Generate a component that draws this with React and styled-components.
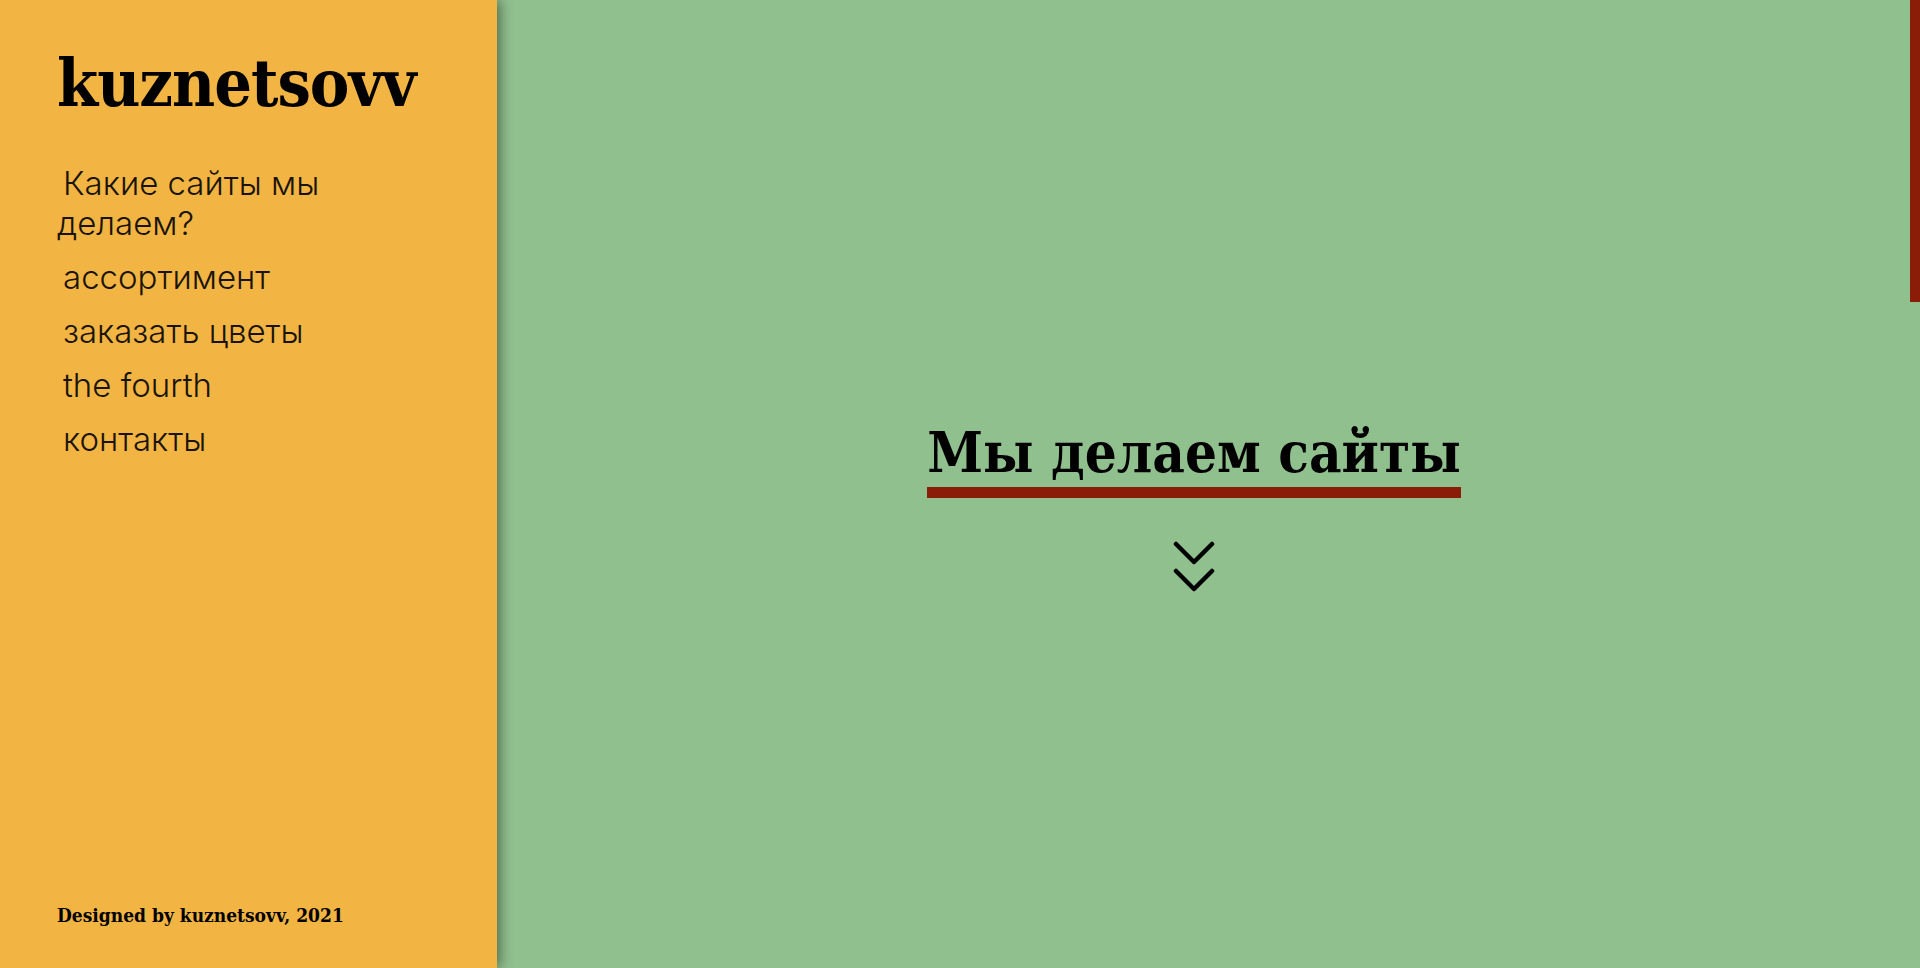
import styled, { createGlobalStyle } from "styled-components";

const GlobalStyle = createGlobalStyle`
  html, body {
    margin: 0;
    padding: 0;
    height: 100%;
    overflow: hidden;
  }
  #root {
    height: 100%;
  }
`;

const slab = `"DejaVu Serif", "Liberation Serif", serif`;
const light = `Inter, "Open Sans", sans-serif`;

const Page = styled.div`
  display: flex;
  height: 100vh;
  background: #91c08f;
`;

const Sidebar = styled.aside`
  width: 497px;
  flex-shrink: 0;
  box-sizing: border-box;
  padding: 44px 58px 42px 57px;
  background: #f2b443;
  box-shadow: 3px 0 12px rgba(0, 0, 0, 0.45);
  display: flex;
  flex-direction: column;
  position: relative;
  z-index: 1;
`;

const Logo = styled.h1`
  margin: 0;
  font-family: ${slab};
  font-weight: 700;
  font-size: 66px;
  font-stretch: condensed;
  letter-spacing: -1px;
  line-height: 1.2;
  color: #000;
`;

const Nav = styled.ul`
  list-style: none;
  margin: 40px 0 0;
  padding: 0;
  width: 330px;
  display: flex;
  flex-direction: column;
  gap: 14px;
`;

const NavItem = styled.li`
  font-family: ${light};
  font-weight: 300;
  font-size: 33px;
  line-height: 40px;
  text-indent: 6px;
  color: #1a1408;
  cursor: pointer;
`;

const Footer = styled.footer`
  margin-top: auto;
  font-family: ${slab};
  font-weight: 700;
  font-size: 19px;
  font-stretch: condensed;
  color: #000;
`;

const Main = styled.main`
  flex: 1;
  display: flex;
  flex-direction: column;
  align-items: center;
  justify-content: center;
  padding-right: 29px;
  padding-top: 47px;
`;

const Heading = styled.h2`
  margin: 0;
  padding-bottom: 7px;
  font-family: ${slab};
  font-weight: 700;
  font-size: 56px;
  font-stretch: condensed;
  line-height: 1;
  color: #000;
  border-bottom: 11px solid #8b1c07;
`;

const Scroll = styled.button`
  margin-top: 43px;
  padding: 0;
  border: 0;
  background: none;
  cursor: pointer;
  display: flex;
`;

const ScrollThumb = styled.div`
  position: fixed;
  top: 0;
  right: 0;
  width: 10px;
  height: 302px;
  background: #8b1c07;
`;

function Chevrons() {
  return (
    <svg width="42" height="51" viewBox="0 0 42 51" fill="none" stroke="#000" strokeWidth="4.5" strokeLinecap="round" strokeLinejoin="round">
      <path d="M3 3 L21 21 L39 3" />
      <path d="M3 30 L21 48 L39 30" />
    </svg>
  );
}

const links = ["Какие сайты мы делаем?", "ассортимент", "заказать цветы", "the fourth", "контакты"];

export default function App() {
  return (
    <Page>
      <GlobalStyle />
      <Sidebar>
        <Logo>kuznetsovv</Logo>
        <Nav>
          {links.map((l) => (
            <NavItem key={l}>{l}</NavItem>
          ))}
        </Nav>
        <Footer>Designed by kuznetsovv, 2021</Footer>
      </Sidebar>
      <Main>
        <Heading>Мы делаем сайты</Heading>
        <Scroll aria-label="scroll down">
          <Chevrons />
        </Scroll>
      </Main>
      <ScrollThumb />
    </Page>
  );
}
